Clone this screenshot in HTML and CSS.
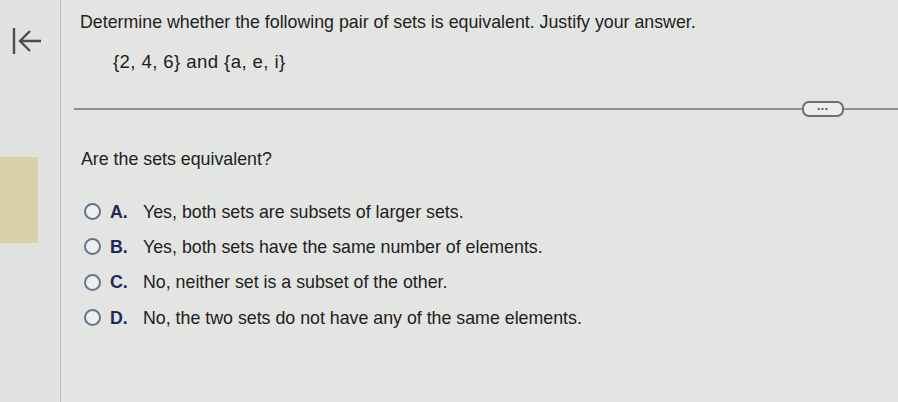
FILE: index.html
```html
<!DOCTYPE html>
<html>
<head>
<meta charset="utf-8">
<link rel="stylesheet" href="styles.css">
</head>
<body>
<div class="page">
  <aside class="side">
    <div class="back">
      <svg width="34" height="30" viewBox="0 0 34 30"><path d="M3 2 V28 M30 15 H10 M19 5 L9 15 L19 25" fill="none" stroke="#4a4d4f" stroke-width="2.4"/></svg>
    </div>
    <div class="tab"></div>
  </aside>
  <main class="main">
    <p class="q">Determine whether the following pair of sets is equivalent. Justify your answer.</p>
    <p class="sets">{2, 4, 6} and {a, e, i}</p>
    <div class="divider">
      <span class="line"></span>
      <span class="more">&bull;&bull;&bull;</span>
      <span class="line short"></span>
    </div>
    <p class="ask">Are the sets equivalent?</p>
    <ul class="opts">
      <li><span class="radio"></span><b>A.</b><span>Yes, both sets are subsets of larger sets.</span></li>
      <li><span class="radio"></span><b>B.</b><span>Yes, both sets have the same number of elements.</span></li>
      <li><span class="radio"></span><b>C.</b><span>No, neither set is a subset of the other.</span></li>
      <li><span class="radio"></span><b>D.</b><span>No, the two sets do not have any of the same elements.</span></li>
    </ul>
  </main>
</div>
</body>
</html>
```
FILE: styles.css
```css
html, body { margin: 0; padding: 0; }
body {
  width: 898px; height: 402px; overflow: hidden;
  background: #e3e5e3;
  font-family: "Liberation Sans", Arial, sans-serif;
  color: #1f2021;
}
.page { display: flex; height: 402px; }
.side {
  width: 60px; flex: none;
  border-right: 1.5px solid #b9bcbc;
  background: #e1e3e2;
}
.back { padding: 26px 0 0 11px; height: 30px; }
.tab {
  margin-top: 101px;
  width: 38px; height: 86px;
  background: #d9d1aa;
}
.main { flex: 1; padding-left: 19px; font-size: 17.8px; line-height: 20px; }
.q { margin: 12px 0 0; }
.sets { margin: 20px 0 0 33px; font-size: 18.6px; letter-spacing: 0.4px; }
.divider { display: flex; align-items: center; margin: 29px 0 0 -6px; }
.line { flex: 1; height: 2px; background: #8d9090; }
.line.short { flex: none; width: 54px; }
.more {
  width: 38px; height: 12px; border: 2px solid #6d7070; border-radius: 7px;
  font-size: 8px; line-height: 12px; text-align: center; letter-spacing: 1px;
  color: #555; background: #eceeed;
}
.ask { margin: 32px 0 0 1px; }
.opts { list-style: none; margin: 25px 0 0 4px; padding: 0; }
.opts li { display: flex; align-items: center; height: 35.3px; }
.radio {
  width: 13px; height: 13px; border: 2px solid #6d7190; border-radius: 50%;
  margin-right: 9px; background: #eef0ef;
}
.opts b { color: #22295a; width: 33px; }
```
